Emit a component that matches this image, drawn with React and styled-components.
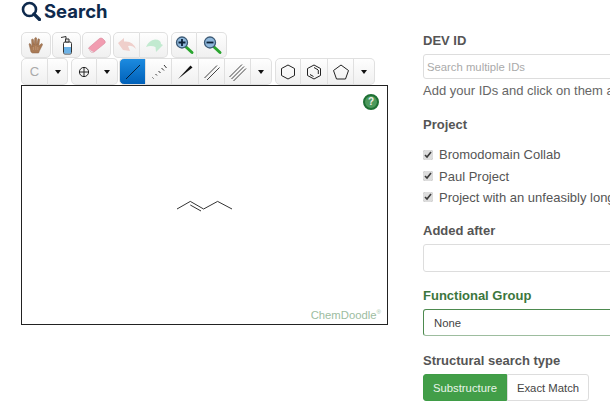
import React from 'react'
import styled, { createGlobalStyle } from 'styled-components'

const GlobalStyle = createGlobalStyle`
  html, body {
    margin: 0;
    padding: 0;
    width: 610px;
    height: 418px;
    overflow: hidden;
    background: #fff;
    font-family: "Liberation Sans", Arial, sans-serif;
  }
`

const Line = ({ d, w = 1, c = '#222' }) => <path d={d} fill="none" stroke={c} strokeWidth={w} />

const HandIcon = () => (
  <svg width="20" height="20" viewBox="0 0 20 20">
    <path d="M5 17 L3 9 Q3.5 8 4.6 9 L6 12 L5.6 4.5 Q6.5 3.5 7.4 4.5 L8.2 10 L8.8 3 Q9.8 2 10.6 3 L10.8 10 L12 4 Q13 3.4 13.6 4.4 L12.8 11 L15.5 8.5 Q16.8 8.6 16.4 10 L13.6 15.5 L12.6 18 L6.4 18 Z" fill="#a97a55" stroke="#8a6244" strokeWidth=".5" />
    <Line d="M7.4 12 V15 M9.8 11 V15 M11.8 12 V15" c="#c9a585" w={0.6} />
  </svg>
)
const BottleIcon = () => (
  <svg width="20" height="22" viewBox="0 0 20 22">
    <rect x="6.5" y="8" width="8" height="12" rx="1.5" fill="#fff" stroke="#333" />
    <rect x="7" y="13" width="7" height="6.5" fill="#6cb2e6" />
    <path d="M8.5 8 V5 H12 V8 Z" fill="#ddd" stroke="#333" />
    <Line d="M9 5 L9 2.5 L4 3.5" c="#333" />
  </svg>
)
const EraserIcon = () => (
  <svg width="20" height="20" viewBox="0 0 20 20">
    <path d="M1.5 13 L12.5 3.5 Q14 2.5 15.5 3.5 L18 6 Q18.8 7.5 17.5 8.6 L7 17 Q5.5 17.8 4 17 Z" fill="#f19cb0" stroke="#d98398" strokeWidth=".6" />
    <path d="M1.5 13 L4.5 16 L7 17 Q5.5 17.8 4 17 Z" fill="#e3e3e3" />
  </svg>
)
const UndoIcon = () => (
  <svg width="22" height="20" viewBox="0 0 22 20">
    <path d="M2 8 L8 3 V6.5 Q17 5.5 20 14 Q16 9.5 12 11 L14 16 L7 15 Z" fill="#efcfcb" />
  </svg>
)
const RedoIcon = () => (
  <svg width="22" height="20" viewBox="0 0 22 20">
    <path d="M20 10 L13 17 L12.5 12 Q8 10 3 12 Q6 5 12 4.5 Q18 4.5 18 9 Z" fill="#c2ead0" />
  </svg>
)
const ZoomIcon = ({ minus }) => (
  <svg width="22" height="22" viewBox="0 0 22 22">
    <path d="M12.5 12.5 L19 18.5" stroke="#2aa52f" strokeWidth="3" strokeLinecap="round" />
    <circle cx="9" cy="8.5" r="5.5" fill="#8fb8dc" stroke="#3d5a75" strokeWidth="1.3" />
    <path d={minus ? 'M5.5 8.5 H12.5' : 'M5.5 8.5 H12.5 M9 5 V12'} stroke="#0c2238" strokeWidth="1.8" />
  </svg>
)
const Caret = styled.span`
  width: 0;
  height: 0;
  border-left: 3.5px solid transparent;
  border-right: 3.5px solid transparent;
  border-top: 4px solid #111;
`
const ChargeIcon = () => (
  <svg width="16" height="16" viewBox="0 0 16 16">
    <circle cx="8" cy="8" r="4.6" fill="none" stroke="#222" />
    <path d="M8 3.5 V12.5 M3.5 8 H12.5" stroke="#222" />
  </svg>
)
const BondIcon = ({ children }) => (
  <svg width="20" height="20" viewBox="0 0 20 20">
    {children}
  </svg>
)
const RingIcon = ({ children }) => (
  <svg width="18" height="18" viewBox="0 0 18 18">
    {children}
  </svg>
)

const Page = styled.div`
  display: grid;
  grid-template-columns: 367px 187px;
  column-gap: 35px;
  padding: 0 0 0 21px;
  width: 610px;
  box-sizing: border-box;
`
const LeftColumn = styled.div`
  display: flex;
  flex-direction: column;
`
const Title = styled.h1`
  display: flex;
  align-items: center;
  gap: 3px;
  margin: 0;
  height: 32px;
  padding-bottom: 10px;
  box-sizing: border-box;
  font-family: Inter, "Noto Sans", sans-serif;
  font-size: 18.5px;
  font-weight: 700;
  letter-spacing: 0;
  color: #0e2a4d;
`
const ToolRow = styled.div`
  display: flex;
  height: ${(p) => p.$height}px;
`
const ToolGroup = styled.div`
  display: flex;
  margin-right: ${(p) => p.$gap ?? 2}px;
`
const ToolButton = styled.div`
  display: flex;
  align-items: center;
  justify-content: center;
  box-sizing: border-box;
  width: ${(p) => p.$w}px;
  height: ${(p) => p.$h || 26}px;
  background: ${(p) => (p.$active ? 'linear-gradient(#1c8be0, #0060b8)' : 'linear-gradient(#fefefe, #f0f0f0)')};
  border: 1px solid #e0e0e0;
  border-left-width: 0;
  font-size: 13px;
  color: #aaa;
  &:first-child {
    border-left-width: 1px;
    border-radius: 5px 0 0 5px;
  }
  &:last-child {
    border-radius: 0 5px 5px 0;
  }
  &:only-child {
    border-radius: 5px;
  }
`
const SketchCanvas = styled.div`
  position: relative;
  width: 367px;
  height: 240px;
  box-sizing: border-box;
  border: 1px solid #222;
  background: #fff;
`
const HelpBadge = styled.div`
  position: absolute;
  top: 8px;
  right: 8px;
  width: 16px;
  height: 16px;
  box-sizing: border-box;
  border-radius: 50%;
  background: #4c9a5c;
  border: 2px solid #1e7034;
  text-align: center;
  color: #eee;
  font-size: 10px;
  line-height: 12px;
  font-weight: 700;
`
const Molecule = styled.svg`
  position: absolute;
  left: 154px;
  top: 114px;
`
const Watermark = styled.div`
  position: absolute;
  right: 6px;
  bottom: 3px;
  font-family: "Liberation Sans", Arial, sans-serif;
  font-size: 11.3px;
  color: #9dbd9f;
  sup {
    font-size: 6px;
    vertical-align: 5px;
    line-height: 0;
  }
`
const RightColumn = styled.div`
  display: flex;
  flex-direction: column;
  padding-top: 32px;
  color: #555;
  font-size: 13px;
  min-width: 0;
`
const Field = styled.div`
  display: flex;
  flex-direction: column;
  margin-bottom: ${(p) => p.$mb ?? 15}px;
`
const Label = styled.label`
  font-weight: 700;
  line-height: 17px;
  margin-bottom: 5px;
  color: ${(p) => (p.$success ? '#3c763d' : '#555')};
`
const TextInput = styled.div`
  box-sizing: border-box;
  width: 220px;
  height: ${(p) => p.$h}px;
  display: flex;
  align-items: center;
  padding-left: ${(p) => p.$pad}px;
  border: 1px solid ${(p) => (p.$success ? '#4d8a4f' : '#ddd')};
  border-bottom-color: ${(p) => (p.$success ? '#9dbd9f' : '#ddd')};
  border-radius: 3px;
  font-size: 11.3px;
  color: ${(p) => p.$color || '#aaa'};
`
const Hint = styled.div`
  margin-top: 3px;
  line-height: 17px;
  white-space: nowrap;
  color: #666;
`
const CheckList = styled.div`
  display: flex;
  flex-direction: column;
  gap: 3.75px;
  margin-top: 8px;
`
const CheckRow = styled.div`
  display: flex;
  align-items: center;
  height: 17.5px;
  white-space: nowrap;
  color: #555;
`
const CheckBox = styled.input`
  width: 10px;
  height: 10px;
  margin: 0 6px 0 0;
  accent-color: #ddd;
`
const SegmentGroup = styled.div`
  display: flex;
  font-size: 11.3px;
`
const Segment = styled.div`
  box-sizing: border-box;
  height: 27px;
  width: ${(p) => p.$w}px;
  flex: none;
  display: flex;
  align-items: center;
  justify-content: center;
  border: 1px solid ${(p) => (p.$active ? '#3f9c46' : '#ddd')};
  background: ${(p) => (p.$active ? '#429e48' : '#fff')};
  color: ${(p) => (p.$active ? '#e8f4e8' : '#444')};
  border-radius: ${(p) => (p.$active ? '3px 0 0 3px' : '0 3px 3px 0')};
`

const App = () => (
  <>
    <GlobalStyle />
    <Page>
      <LeftColumn>
        <Title>
          <svg width="20" height="20" viewBox="0 0 20 20">
            <circle cx="8.5" cy="8.5" r="6.5" fill="none" stroke="#0e2a4d" strokeWidth="2.6" />
            <path d="M13 13 L18.5 18.5" stroke="#0e2a4d" strokeWidth="3.2" strokeLinecap="round" />
          </svg>
          Search
        </Title>
        <ToolRow $height={26}>
          <ToolGroup $gap={1}><ToolButton $w={30}><HandIcon /></ToolButton></ToolGroup>
          <ToolGroup $gap={1}><ToolButton $w={29}><BottleIcon /></ToolButton></ToolGroup>
          <ToolGroup><ToolButton $w={29}><EraserIcon /></ToolButton></ToolGroup>
          <ToolGroup $gap={3}>
            <ToolButton $w={27}><UndoIcon /></ToolButton>
            <ToolButton $w={28}><RedoIcon /></ToolButton>
          </ToolGroup>
          <ToolGroup>
            <ToolButton $w={26}><ZoomIcon /></ToolButton>
            <ToolButton $w={30}><ZoomIcon minus /></ToolButton>
          </ToolGroup>
        </ToolRow>
        <ToolRow $height={27}>
          <ToolGroup $gap={3}>
            <ToolButton $w={27} $h={27}>C</ToolButton>
            <ToolButton $w={20} $h={27}><Caret /></ToolButton>
          </ToolGroup>
          <ToolGroup $gap={1}>
            <ToolButton $w={26} $h={27}><ChargeIcon /></ToolButton>
            <ToolButton $w={21} $h={27}><Caret /></ToolButton>
          </ToolGroup>
          <ToolGroup $gap={3}>
            <ToolButton $w={27} $h={27} $active>
              <BondIcon><Line d="M3 17 L17 3" c="#06203a" /></BondIcon>
            </ToolButton>
            <ToolButton $w={26} $h={27}>
              <BondIcon><Line d="M3.5 15.5 L4.5 16.5 M6.5 12 L8 13.5 M9.5 9 L11.5 11 M12.5 6 L15 8.5 M15 3 L17.5 6" c="#333" /></BondIcon>
            </ToolButton>
            <ToolButton $w={27} $h={27}>
              <BondIcon><path d="M3 17 L15.5 3.5 L17.5 5.5 Z" fill="#111" /></BondIcon>
            </ToolButton>
            <ToolButton $w={26} $h={27}>
              <BondIcon><Line d="M2.5 16 L15 3.5 M5 18 L17.5 5.5" c="#444" /></BondIcon>
            </ToolButton>
            <ToolButton $w={26} $h={27}>
              <BondIcon><Line d="M1.5 15 L14 2.5 M3.5 17 L16 4.5 M5.5 19 L18 6.5" c="#444" /></BondIcon>
            </ToolButton>
            <ToolButton $w={21} $h={27}><Caret /></ToolButton>
          </ToolGroup>
          <ToolGroup>
            <ToolButton $w={26} $h={27}>
              <RingIcon><path d="M9 2 L15.5 5.5 V12.5 L9 16 L2.5 12.5 V5.5 Z" fill="none" stroke="#222" /></RingIcon>
            </ToolButton>
            <ToolButton $w={27} $h={27}>
              <RingIcon><path d="M9 2 L15.5 5.5 V12.5 L9 16 L2.5 12.5 V5.5 Z M9 4.5 L13 6.8 M13.3 7 V11 M5 11.5 L8.5 13.5" fill="none" stroke="#222" /></RingIcon>
            </ToolButton>
            <ToolButton $w={26} $h={27}>
              <RingIcon><path d="M9 2 L16.5 7.5 L13.5 16 H4.5 L1.5 7.5 Z" fill="none" stroke="#222" /></RingIcon>
            </ToolButton>
            <ToolButton $w={21} $h={27}><Caret /></ToolButton>
          </ToolGroup>
        </ToolRow>
        <SketchCanvas>
          <HelpBadge>?</HelpBadge>
          <Molecule width="60" height="16" viewBox="0 0 60 16">
            <Line d="M1 9 L14.3 1.4 L27.6 9 L41.6 1.4 L56 9" c="#333" />
            <Line d="M14.3 5 L25 11" c="#333" />
          </Molecule>
          <Watermark>ChemDoodle<sup>®</sup></Watermark>
        </SketchCanvas>
      </LeftColumn>
      <RightColumn>
        <Field $mb={17}>
          <Label>DEV ID</Label>
          <TextInput $h={25} $pad={3}>Search multiple IDs</TextInput>
          <Hint>Add your IDs and click on them a</Hint>
        </Field>
        <Field $mb={16}>
          <Label>Project</Label>
          <CheckList>
            <CheckRow><CheckBox type="checkbox" defaultChecked />Bromodomain Collab</CheckRow>
            <CheckRow><CheckBox type="checkbox" defaultChecked />Paul Project</CheckRow>
            <CheckRow><CheckBox type="checkbox" defaultChecked />Project with an unfeasibly long</CheckRow>
          </CheckList>
        </Field>
        <Field $mb={15}>
          <Label>Added after</Label>
          <TextInput $h={28} $pad={10} />
        </Field>
        <Field $mb={16}>
          <Label $success>Functional Group</Label>
          <TextInput $h={27} $pad={10} $color="#444" $success>None</TextInput>
        </Field>
        <Field $mb={0}>
          <Label>Structural search type</Label>
          <SegmentGroup>
            <Segment $w={84} $active>Substructure</Segment>
            <Segment $w={82}>Exact Match</Segment>
          </SegmentGroup>
        </Field>
      </RightColumn>
    </Page>
  </>
)

export default App
